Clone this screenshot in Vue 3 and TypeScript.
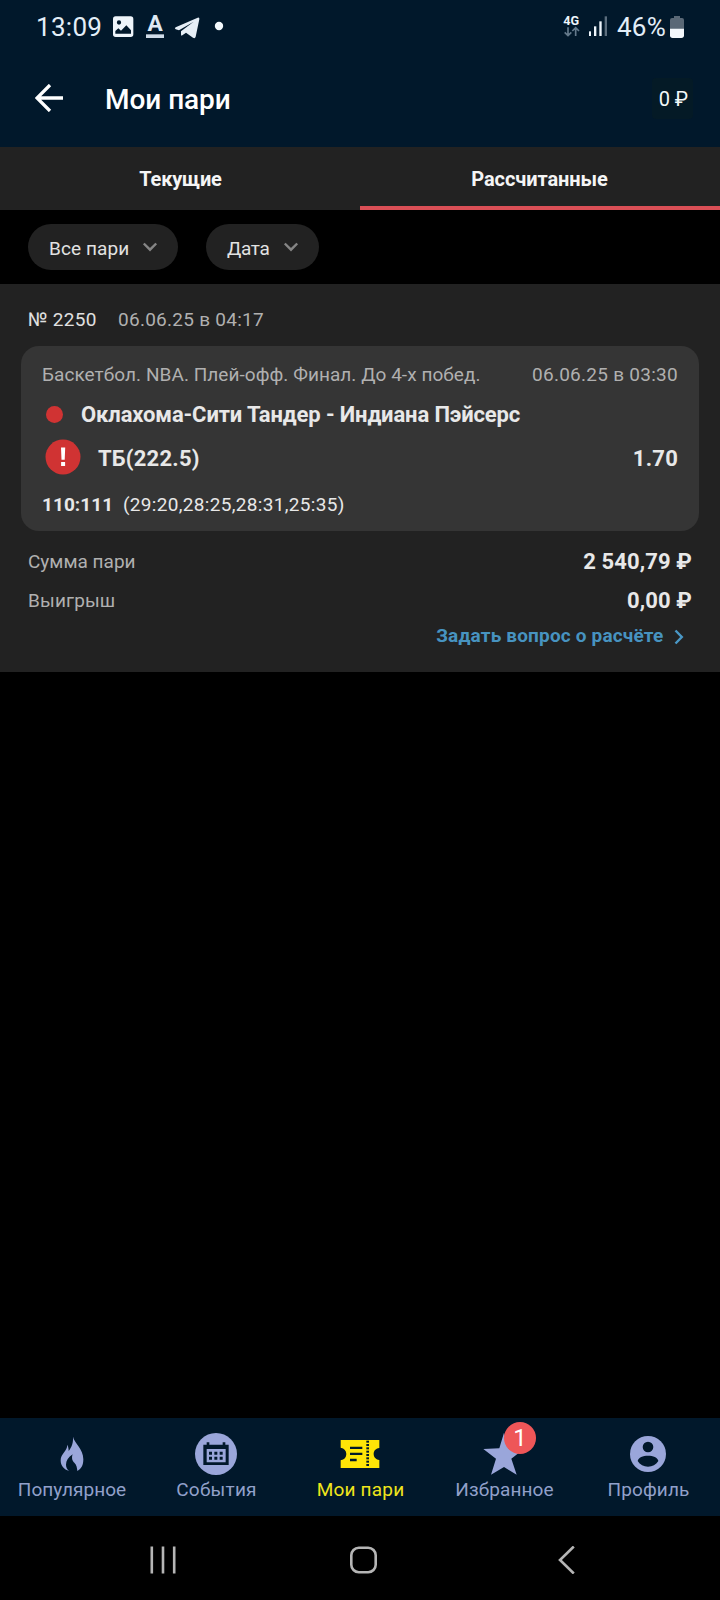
<script setup lang="ts">
interface NavItem {
  id: string
  label: string
  spacing: string
  badge?: number
}

const tabs = [
  { label: 'Текущие', active: false },
  { label: 'Рассчитанные', active: true },
]

const filters = [
  { id: 'all', label: 'Все пари' },
  { id: 'date', label: 'Дата' },
]

const bet = {
  number: '№ 2250',
  placed: '06.06.25 в 04:17',
  league: 'Баскетбол. NBA. Плей-офф. Финал. До 4-х побед.',
  start: '06.06.25 в 03:30',
  teams: 'Оклахома-Сити Тандер - Индиана Пэйсерс',
  pick: 'ТБ(222.5)',
  odds: '1.70',
  score: '110:111',
  periods: '(29:20,28:25,28:31,25:35)',
}

const totals = [
  { label: 'Сумма пари', value: '2 540,79 ₽' },
  { label: 'Выигрыш', value: '0,00 ₽' },
]

const nav: NavItem[] = [
  { id: 'popular', label: 'Популярное', spacing: 'tight' },
  { id: 'events', label: 'События', spacing: 'wide' },
  { id: 'bets', label: 'Мои пари', spacing: 'wide' },
  { id: 'favorites', label: 'Избранное', spacing: 'normal', badge: 1 },
  { id: 'profile', label: 'Профиль', spacing: 'normal' },
]

const dashes = [122, 132, 142, 152, 162, 172, 182, 192]
</script>

<template>
  <div class="screen">
    <header class="top">
      <div class="status">
        <span class="clock">13:09</span>
        <svg class="status-left" viewBox="330 18 345 120">
          <path fill="#eef4fa" fill-rule="evenodd" d="M347 49H392Q400 49 400 57V103Q400 111 392 111H347Q339 111 339 103V57Q339 49 347 49ZM346 101H393V91L379 76L363 92L355 85L346 93ZM357 61A6.5 6.5 0 1 0 357 74A6.5 6.5 0 1 0 357 61Z" />
          <text x="465.5" y="94" text-anchor="middle" class="glyph-a">A</text>
          <rect x="438" y="103" width="54" height="11" fill="#cfdbe8" />
          <path fill="#e6eef6" d="M527 82L593 53Q599 51 598 58L587 110Q585 117 579 113L558 98L547 106Q543 109 543 103V94L581 65L537 91L527 88Q522 85 527 82Z" />
          <circle cx="657" cy="78" r="12.500" fill="#f3f8fc" />
        </svg>
        <span class="grow" />
        <svg class="status-net" viewBox="600 18 150 120">
          <text x="610" y="75" class="net">4G</text>
          <path d="M624 82V106M614 97L624 107L634 97M647 108V84M637 93L647 83L657 93" fill="none" stroke="#64798b" stroke-width="5" />
          <rect x="687" y="94" width="6" height="14" fill="#eef5fb" />
          <rect x="702" y="79" width="7" height="29" fill="#eef5fb" />
          <rect x="718" y="64" width="7" height="44" fill="#eef5fb" />
          <rect x="734" y="49" width="7" height="59" fill="#5b6d7d" />
        </svg>
        <span class="percent">46%</span>
        <svg class="battery" viewBox="927 36 48 84">
          <path fill="#5a6876" d="M942 48H960V54H966Q972 54 972 60V88H930V60Q930 54 936 54H942Z" />
          <path fill="#f3f7fb" d="M930 86H972V106Q972 114 964 114H938Q930 114 930 106Z" />
        </svg>
      </div>
      <div class="appbar">
        <svg class="back" viewBox="0 0 28 28">
          <path d="M15 1L2 14L15 27M2 14H28" fill="none" stroke="#fff" stroke-width="3.300" />
        </svg>
        <h1>Мои пари</h1>
        <span class="balance">0 ₽</span>
      </div>
    </header>

    <nav class="tabs">
      <div v-for="t in tabs" :key="t.label" class="tab" :class="{ active: t.active }">{{ t.label }}</div>
    </nav>

    <div class="filters">
      <button v-for="f in filters" :key="f.id" class="chip" :class="f.id">
        <span>{{ f.label }}</span>
        <svg viewBox="0 0 16 16"><path d="M1.800 4.500L8 10.700L14.200 4.500" fill="none" stroke="#858585" stroke-width="2.400" /></svg>
      </button>
    </div>

    <section class="bet">
      <div class="meta"><span class="number">{{ bet.number }}</span><span class="placed">{{ bet.placed }}</span></div>
      <article class="card">
        <div class="row league"><span class="league-name">{{ bet.league }}</span><span class="start">{{ bet.start }}</span></div>
        <div class="row teams"><i class="dot" /><span>{{ bet.teams }}</span></div>
        <div class="row pick">
          <svg class="alert" viewBox="0 0 36 36">
            <circle cx="18" cy="18" r="17.500" fill="#d03333" />
            <path d="M16 8.500H20.200L19.700 20.700H16.500ZM16.100 23H20.100V27H16.100Z" fill="#fff" />
          </svg>
          <span class="pick-name">{{ bet.pick }}</span><span class="odds">{{ bet.odds }}</span>
        </div>
        <div class="row score"><b>{{ bet.score }}</b><span>{{ bet.periods }}</span></div>
      </article>
      <div v-for="t in totals" :key="t.label" class="total">
        <span>{{ t.label }}</span><b>{{ t.value }}</b>
      </div>
      <a class="ask">
        <span>Задать вопрос о расчёте</span>
        <svg viewBox="0 0 10 16"><path d="M1.500 1.500L7.800 8L1.500 14.500" fill="none" stroke="#4a98c6" stroke-width="2.400" /></svg>
      </a>
    </section>

    <main class="empty" />

    <nav class="bottom">
      <div v-for="n in nav" :key="n.id" class="item" :class="[n.id, n.spacing]">
        <svg v-if="n.id === 'popular'" viewBox="0 54 432 174">
          <path d="M219 110C223 130 250 145 250 178C250 195 244 207 232 213C231 203 230 194 223 188C217 183 214 174 218 163C205 171 198 182 198 194C198 203 202 209 208 213C191 209 182 197 182 181C182 160 202 154 202 134C205 140 206 147 206 153C216 140 220 128 219 110Z" />
        </svg>
        <svg v-else-if="n.id === 'events'" viewBox="432 54 432 174">
          <circle cx="648" cy="162" r="63" />
          <path class="cut" fill-rule="evenodd" d="M610 134H620V127H628V134H668V127H676V134H686V195H610ZM620 147V187H677V147Z" />
          <path class="cut" d="M627 155h9v9h-9zM643 155h9v9h-9zM659 155h9v9h-9zM627 170h9v9h-9zM643 170h9v9h-9zM659 170h9v9h-9z" />
        </svg>
        <svg v-else-if="n.id === 'bets'" viewBox="864 54 432 174">
          <path d="M1022 120H1138V144C1126 146 1121 153 1121 162C1121 171 1126 178 1138 180V204H1022V181C1033 179 1039 172 1039 162C1039 152 1033 145 1022 143Z" />
          <path class="cut" d="M1050 140h37v7h-37zM1050 158h37v7h-37zM1050 176.500h20v7h-20z" />
          <rect v-for="y in dashes" :key="y" class="cut" x="1099" :y="y" width="8" height="6" />
        </svg>
        <svg v-else-if="n.id === 'favorites'" viewBox="216 54 432 174">
          <path d="M432 98L446 146H492L454 176L470 224L432 201L393 224L408 176L370 147L418 145Z" />
        </svg>
        <svg v-else viewBox="648 54 432 174">
          <circle cx="864" cy="162" r="54" />
          <circle class="cut" cx="864" cy="141" r="16" />
          <path class="cut" d="M833 183C835 172 849 167 864 167C879 167 893 172 895 183C888 194 877 200 864 200C851 200 840 194 833 183Z" />
        </svg>
        <span class="label">{{ n.label }}</span>
        <span v-if="n.badge" class="badge">{{ n.badge }}</span>
      </div>
    </nav>

    <footer class="system">
      <svg viewBox="0 0 28 28"><path d="M2.800 .5V27.500M14 .5V27.500M25.200 .5V27.500" /></svg>
      <svg viewBox="0 0 28 28"><rect x="1.300" y="1.800" width="24.400" height="24.400" rx="7.500" /></svg>
      <svg viewBox="0 0 28 28"><path d="M21.800 .5L8 14L21.800 27.500" /></svg>
    </footer>
  </div>
</template>

<style>
body { margin: 0; background: #000; }
</style>

<style scoped>
.screen {
  width: 720px;
  height: 1600px;
  display: flex;
  flex-direction: column;
  background: #000;
  color: #e8e8e8;
  font-family: Roboto, "Liberation Sans", sans-serif;
  font-size: 19px;
  white-space: nowrap;
  overflow: hidden;
}
svg { display: block; flex: none; }
.top { height: 147px; background: #01182b; }
.status { height: 54px; display: flex; align-items: center; padding: 0 35px 0 36px; color: #e3eef8; }
.clock { width: 74px; font-size: 26px; letter-spacing: .3px; }
.status-left { width: 115px; height: 40px; margin-top: -2px; }
.glyph-a { font: 700 68px Roboto, sans-serif; fill: #dfe9f3; }
.grow { flex: 1; }
.status-net { width: 50px; height: 40px; margin-top: -2px; }
.net { font: 700 38px Roboto, sans-serif; fill: #eef5fb; }
.percent { width: 52px; padding-left: 7px; font-size: 26px; letter-spacing: .24px; }
.battery { width: 16px; height: 28px; margin-top: -2px; }
.appbar { height: 90px; display: flex; align-items: center; padding: 0 27px 0 35px; }
.back { width: 28px; height: 28px; margin-top: -2px; }
h1 { margin: 1px 0 0 42px; flex: 1; font-size: 28px; line-height: 40px; font-weight: 500; letter-spacing: -.05px; color: #fff; }
.balance {
  box-sizing: border-box;
  width: 41px;
  height: 41px;
  margin-top: -1px;
  padding-right: 5px;
  border-radius: 4px;
  background: #041a26;
  line-height: 42px;
  text-align: right;
  font-size: 20px;
  letter-spacing: -.1px;
  color: #f2f8f8;
}
.tabs { height: 63px; display: flex; background: #222; }
.tab {
  flex: 1;
  box-sizing: border-box;
  padding-left: 1px;
  line-height: 64px;
  text-align: center;
  font-size: 20px;
  font-weight: 700;
  letter-spacing: -.2px;
  color: #f5f5f5;
}
.tab.active { border-bottom: 4px solid #da4f56; padding: 0 1px 0 0; letter-spacing: -.08px; }
.filters { height: 74px; display: flex; align-items: center; gap: 28px; padding-left: 28px; }
.chip {
  box-sizing: border-box;
  width: 150px;
  height: 46px;
  display: flex;
  align-items: center;
  justify-content: space-between;
  padding: 2px 20px 0 21px;
  border: 0;
  border-radius: 23px;
  background: #222;
  color: #e2e2e2;
  font: 400 19px Roboto, sans-serif;
  letter-spacing: .1px;
}
.chip.date { width: 113px; letter-spacing: -.3px; }
.chip svg { width: 16px; height: 16px; margin-top: -3px; }
.bet { height: 388px; background: #222; }
.meta { box-sizing: border-box; height: 62px; padding: 9px 0 0 28px; display: flex; align-items: center; }
.number { width: 90px; letter-spacing: .3px; color: #e0e0e0; }
.placed { letter-spacing: .27px; color: #b0b0b0; }
.card { box-sizing: border-box; height: 184.500px; margin: 0 21px; padding: 10px 21px 0; border-radius: 18px; background: #353535; }
.row { display: flex; align-items: center; }
.league { height: 37px; justify-content: space-between; color: #b0b0b0; }
.league-name { letter-spacing: .05px; }
.start { letter-spacing: .27px; }
.teams { height: 43px; font-size: 22px; font-weight: 700; letter-spacing: -.12px; }
.dot { width: 17px; height: 17px; margin: 0 18px 0 4px; border-radius: 50%; background: #d03333; }
.pick { height: 45px; font-size: 22px; font-weight: 700; letter-spacing: .22px; }
.alert { width: 36px; height: 36px; margin: -3px 17px 0 3px; }
.pick-name { flex: 1; }
.score { height: 47px; }
.score b { width: 81px; letter-spacing: .05px; }
.score span { letter-spacing: .32px; }
.total { height: 39px; margin: 0 28px; display: flex; align-items: center; justify-content: space-between; letter-spacing: .15px; color: #b0b0b0; }
.card + .total { margin-top: 11.500px; }
.card + .total > span { letter-spacing: 0; }
.total b { font-size: 22px; letter-spacing: .12px; color: #e8e8e8; }
.ask { height: 31px; display: flex; align-items: center; justify-content: flex-end; gap: 11px; padding-right: 36.500px; color: #4793c0; font-weight: 700; letter-spacing: .17px; }
.ask svg { width: 10px; height: 16px; margin-top: 3px; margin-left: -1px; }
.empty { flex: 1; }
.bottom { height: 98px; display: flex; background: #01182b; }
.item { position: relative; width: 144px; color: #91a0ca; text-align: center; fill: #9aa6da; }
.item svg { width: 144px; height: 58px; }
.item .cut { fill: #01182b; }
.label { display: block; line-height: 27px; }
.tight .label { letter-spacing: .05px; }
.wide .label { padding-left: 1px; letter-spacing: .2px; }
.normal .label { padding-left: 1px; letter-spacing: .13px; }
.item.bets { color: #f0e51b; fill: #ffe507; }
.badge { position: absolute; left: 72px; top: 4px; width: 32px; height: 32px; border-radius: 50%; background: #ee5658; color: #fff; font-size: 24px; line-height: 33px; }
.system { height: 84px; box-sizing: border-box; padding: 3px 0 0 148.500px; display: flex; align-items: center; gap: 173.500px; }
.system svg { width: 28px; height: 28px; fill: none; stroke: #b5b5b5; stroke-width: 2.600; }
</style>
